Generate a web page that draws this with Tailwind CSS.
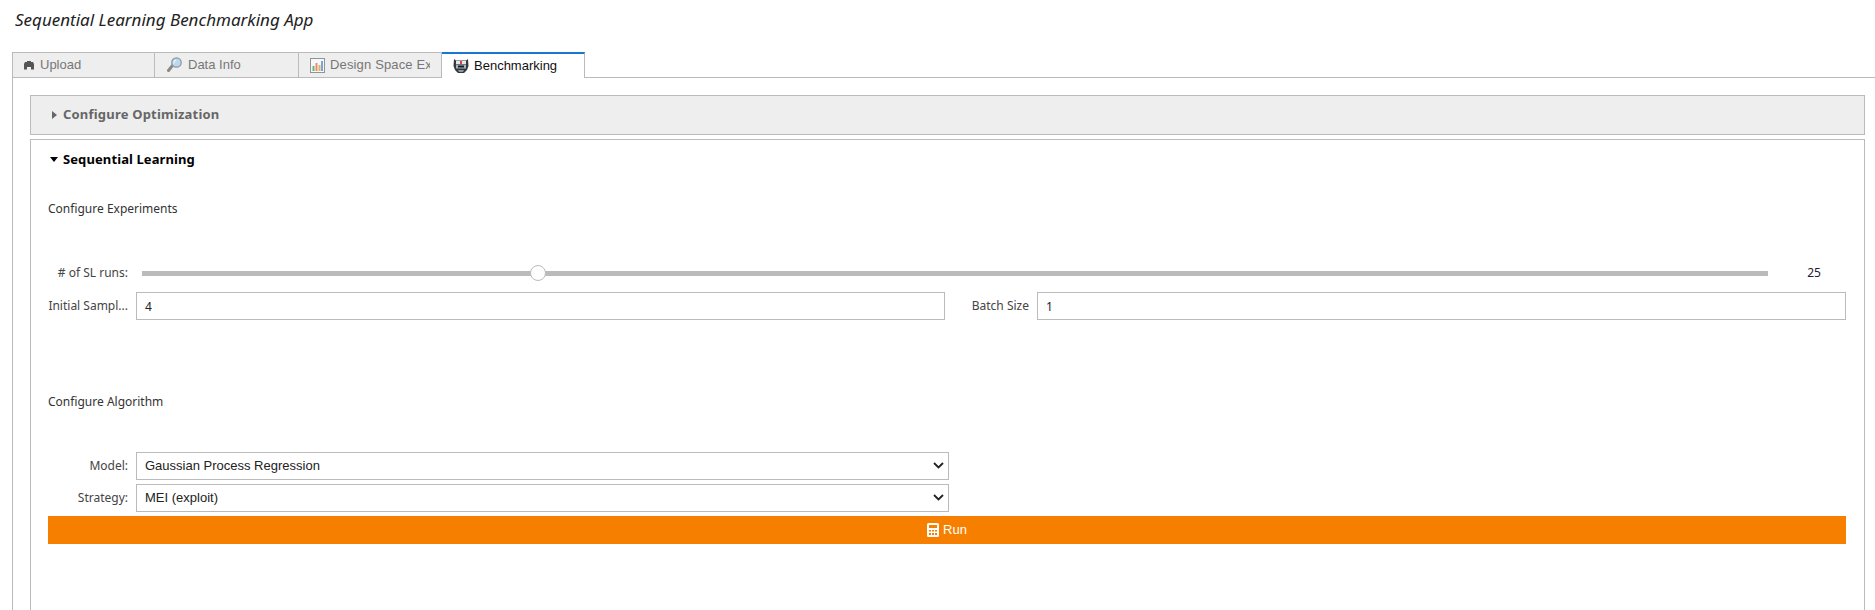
<!doctype html>
<html>
<head>
<meta charset="utf-8">
<script src="https://cdn.jsdelivr.net/npm/@tailwindcss/browser@4"></script>
</head>
<body class="bg-white overflow-hidden font-['Noto_Sans',sans-serif] text-[12px] text-[#333]">
<div class="w-[1875px] h-[610px] overflow-hidden">
  <div class="h-[52px] pl-[15px] pt-[8px] italic text-[17px] leading-[24px] text-[#222]">Sequential Learning Benchmarking App</div>

  <div class="flex h-[25px] ml-[12px] font-['Liberation_Sans',sans-serif] text-[13px] text-[#777]">
    <div class="w-[143px] border border-[#bbb] border-b-0 bg-[#eee] flex items-center pl-[11px]">
      <svg class="w-[10px] h-[9px] mr-[6px]" viewBox="0 0 10 9"><path d="M0 8.500V3l1-2h2V0h4v1h2l1 2v5.500H7V6H3v2.500z" fill="#555"/></svg>
      <span>Upload</span>
    </div>
    <div class="w-[144px] border border-l-0 border-[#bbb] border-b-0 bg-[#eee] flex items-center pl-[12px]">
      <svg class="w-[15px] h-[16px] mr-[6px]" viewBox="0 0 15 16"><path d="M5.500 8.500L1.500 13.500" stroke="#8a8a82" stroke-width="3" stroke-linecap="round"/><circle cx="9.500" cy="5.500" r="4.700" fill="#bcd8ee" stroke="#8d979f" stroke-width="1.300"/><path d="M7 6.500a3 3 0 0 1 2-3.500" fill="none" stroke="#eef6fc" stroke-width="1.200"/></svg>
      <span>Data Info</span>
    </div>
    <div class="w-[143px] border border-l-0 border-[#bbb] border-b-0 bg-[#eee] flex items-center pl-[11px]">
      <svg class="w-[15px] h-[15px] mr-[5px] shrink-0" viewBox="0 0 15 15"><rect x="0.500" y="0.500" width="14" height="14" fill="#f7f7f7" stroke="#8b959c"/><rect x="2.500" y="8" width="2" height="5" fill="#6fb56f"/><rect x="5.500" y="5" width="2" height="8" fill="#e58b7c"/><rect x="8.500" y="7" width="2" height="6" fill="#e8b15f"/><rect x="11" y="3" width="2" height="10" fill="#7aa5d8"/></svg>
      <span class="w-[100px] overflow-hidden whitespace-nowrap tracking-[0.15px]">Design Space Exp</span>
    </div>
    <div class="w-[143px] border-t-2 border-t-[#1976d2] border-r border-r-[#bbb] bg-white flex items-center pl-[11px] text-[#111] relative z-10 h-[26px]">
      <svg class="w-[16px] h-[16px] mr-[5px] shrink-0" viewBox="0 0 16 16"><path d="M1 1l2 1.500h10L15 1l.5 7-1.500 4-3 3H5l-3-3-1.500-4z" fill="#34393e"/><rect x="3" y="3" width="10" height="3" fill="#e6e6e6"/><rect x="7" y="3" width="2" height="3" fill="#d9463f"/><rect x="3" y="6.500" width="10" height="4" fill="#aab4bb"/><rect x="5" y="7.500" width="6" height="2" fill="#12202c"/><path d="M5 12h6l-1 2H6z" fill="#8f989e"/></svg>
      <span>Benchmarking</span>
    </div>
  </div>

  <div class="ml-[12px] border-l border-t border-[#bbb] h-[534px] pt-[17px] pl-[17px] pr-[10px]">
    <div class="h-[40px] border border-[#bbb] bg-[#eee] flex items-center pl-[21px] text-[#666] font-bold text-[13px] tracking-[0.2px]">
      <svg class="w-[5px] h-[8px] mr-[6px]" viewBox="0 0 5 8"><path d="M0 0l5 4-5 4z" fill="#666"/></svg>
      Configure Optimization
    </div>
    <div class="mt-[4px] h-[480px] border border-[#bbb] pl-[17px] pr-[18px]">
      <div class="h-[39px] flex items-center pl-[4px] text-black font-bold text-[13px] tracking-[0.1px]">
        <svg class="w-[8px] h-[5px] mr-[5px] -ml-[2px]" viewBox="0 0 8 5"><path d="M0 0h8L4 5z" fill="#000"/></svg>
        Sequential Learning
      </div>

      <div class="mt-[20px] h-[20px] leading-[20px]">Configure Experiments</div>

      <div class="mt-[40px] h-[28px] flex items-center">
        <div class="w-[80px] text-right text-[#444] whitespace-nowrap">&#35; of SL runs:</div>
        <div class="ml-[14px] flex-1 h-[5px] bg-[#bbb] relative">
          <div class="absolute left-[388px] -top-[6px] w-[16px] h-[16px] rounded-full bg-white border border-[#bbb]"></div>
        </div>
        <div class="w-[78px] text-center pl-[14px] text-[#223]">25</div>
      </div>

      <div class="mt-[5px] h-[28px] flex items-center">
        <div class="w-[897px] flex items-center">
          <div class="w-[80px] text-right text-[#444] whitespace-nowrap">Initial Sampl...</div>
          <input class="ml-[8px] flex-1 h-[28px] border border-[#bbb] px-[8px] font-['Noto_Sans',sans-serif] text-[12px] text-[#222] outline-none" value="4">
        </div>
        <div class="flex-1 text-right pr-[8px] text-[#444]">Batch Size</div>
        <input class="w-[809px] h-[28px] border border-[#bbb] px-[8px] font-['Noto_Sans',sans-serif] text-[12px] text-[#223] outline-none" value="1">
      </div>

      <div class="mt-[72px] h-[20px] leading-[20px]">Configure Algorithm</div>

      <div class="mt-[40px] h-[28px] flex items-center">
        <div class="w-[80px] text-right text-[#444]">Model:</div>
        <div class="ml-[8px] w-[813px] h-[28px] relative">
          <select class="w-full h-full border border-[#bbb] pl-[8px] pr-[24px] bg-white font-['Liberation_Sans',sans-serif] text-[13px] text-[#222] outline-none appearance-none">
            <option>Gaussian Process Regression</option>
          </select>
          <svg class="absolute right-[5px] top-[10px] w-[11px] h-[7px] pointer-events-none" viewBox="0 0 11 7"><path d="M1 1l4.500 4.500L10 1" fill="none" stroke="#222" stroke-width="1.800"/></svg>
        </div>
      </div>
      <div class="mt-[4px] h-[28px] flex items-center">
        <div class="w-[80px] text-right text-[#444]">Strategy:</div>
        <div class="ml-[8px] w-[813px] h-[28px] relative">
          <select class="w-full h-full border border-[#bbb] pl-[8px] pr-[24px] bg-white font-['Liberation_Sans',sans-serif] text-[13px] text-[#222] outline-none appearance-none">
            <option>MEI (exploit)</option>
          </select>
          <svg class="absolute right-[5px] top-[10px] w-[11px] h-[7px] pointer-events-none" viewBox="0 0 11 7"><path d="M1 1l4.500 4.500L10 1" fill="none" stroke="#222" stroke-width="1.800"/></svg>
        </div>
      </div>
      <div class="mt-[4px] h-[28px] bg-[#f77f00] flex items-center justify-center font-['Liberation_Sans',sans-serif] text-[13px] text-white">
        <svg class="w-[12px] h-[14px] mr-[4px]" viewBox="0 0 12 14"><path fill-rule="evenodd" d="M1.500 0h9A1.500 1.500 0 0 1 12 1.500v11a1.500 1.500 0 0 1-1.500 1.500h-9A1.500 1.500 0 0 1 0 12.500v-11A1.500 1.500 0 0 1 1.500 0zM2 2v3h8V2zM2 7v1.500h2V7zm3 0v1.500h2V7zm3 0v1.500h2V7zM2 10v2h2v-2zm3 0v2h2v-2zm3 0v2h2v-2z" fill="#fff"/></svg>
        Run
      </div>
    </div>
  </div>
</div>
</body>
</html>
